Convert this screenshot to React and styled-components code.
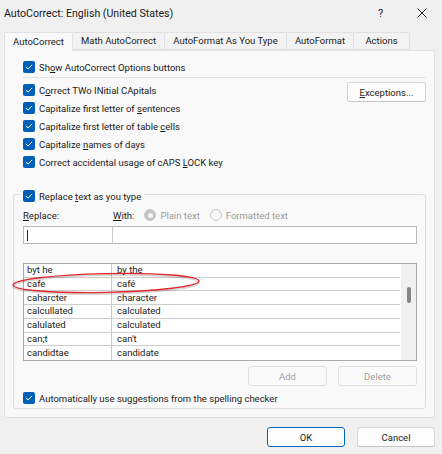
import React from 'react'
import styled, { createGlobalStyle } from 'styled-components'

const GlobalStyle = createGlobalStyle`
  html, body {
    margin: 0;
    padding: 0;
    background: #f0f0f0;
  }
  body {
    font-family: Roboto, "Noto Sans", sans-serif;
    font-size: 9.5px;
    color: #1b1b1b;
  }
`

const tabs = [
    { label: 'AutoCorrect', w: 69, active: true },
    { label: 'Math AutoCorrect', w: 92 },
    { label: 'AutoFormat As You Type', w: 122 },
    { label: 'AutoFormat', w: 67 },
    { label: 'Actions', w: 56 },
]

const entries = [
    ['byt he', 'by the'],
    ['cafe', 'café'],
    ['caharcter', 'character'],
    ['calcullated', 'calculated'],
    ['calulated', 'calculated'],
    ['can;t', "can't"],
    ['candidtae', 'candidate'],
]

const Check = () => (
    <CheckBox>
        <svg width="12" height="12" viewBox="0 0 12 12">
            <path d="M3.2 6.2 L5.1 8 L8.8 4.2" fill="none" stroke="#fff" strokeWidth="1" strokeLinecap="round" strokeLinejoin="round" />
        </svg>
    </CheckBox>
)

const Option = ({ children }) => (
    <CheckRow>
        <Check />
        <span>{children}</span>
    </CheckRow>
)

const App = () => {
    return (
        <Window>
            <GlobalStyle />
            <TitleBar>
                <Title>AutoCorrect: English (United States)</Title>
                <CaptionButton>?</CaptionButton>
                <CaptionButton>
                    <svg width="10" height="10" viewBox="0 0 10 10">
                        <path d="M0.5 0.5 L9.5 9.5 M9.5 0.5 L0.5 9.5" stroke="#222" strokeWidth="1" />
                    </svg>
                </CaptionButton>
            </TitleBar>

            <TabStrip>
                {tabs.map(t => (
                    <Tab key={t.label} w={t.w} active={t.active}>{t.label}</Tab>
                ))}
            </TabStrip>

            <Panel>
                <Option>Sh<u>o</u>w AutoCorrect Options buttons</Option>
                <Separator />

                <OptionsBlock>
                    <OptionColumn>
                        <Option>C<u>o</u>rrect TWo INitial CApitals</Option>
                        <Option>Capitalize first letter of <u>s</u>entences</Option>
                        <Option>Capitalize first letter of table <u>c</u>ells</Option>
                        <Option>Capitalize <u>n</u>ames of days</Option>
                        <Option>Correct accidental usage of cAPS <u>L</u>OCK key</Option>
                    </OptionColumn>
                    <ExceptionsButton><u>E</u>xceptions...</ExceptionsButton>
                </OptionsBlock>

                <GroupBox>
                    <GroupHeader>
                        <Check />
                        <span>Replace <u>t</u>ext as you type</span>
                    </GroupHeader>

                    <LabelRow>
                        <ReplaceLabel><u>R</u>eplace:</ReplaceLabel>
                        <span><u>W</u>ith:</span>
                        <RadioItem>
                            <Radio checked />
                            <span>Plain text</span>
                        </RadioItem>
                        <RadioItem>
                            <Radio />
                            <span>Formatted text</span>
                        </RadioItem>
                    </LabelRow>

                    <InputRow>
                        <ReplaceInput><Caret /></ReplaceInput>
                        <WithInput />
                    </InputRow>

                    <ListBox>
                        <ListRows>
                            {entries.map(([from, to]) => (
                                <ListRow key={from}>
                                    <FromCell>{from}</FromCell>
                                    <ToCell>{to}</ToCell>
                                </ListRow>
                            ))}
                        </ListRows>
                        <ScrollBar>
                            <Thumb />
                        </ScrollBar>
                    </ListBox>

                    <ButtonRow>
                        <SmallButton disabled>Add</SmallButton>
                        <SmallButton disabled>Delete</SmallButton>
                    </ButtonRow>

                    <AutoRow>
                        <Check />
                        <span>Automatically use su<u>g</u>gestions from the spelling checker</span>
                    </AutoRow>
                </GroupBox>
            </Panel>

            <Footer>
                <DialogButton primary>OK</DialogButton>
                <DialogButton>Cancel</DialogButton>
            </Footer>

            {/* hand drawn annotation round the cafe row */}
            <Annotation width="200" height="30" viewBox="0 0 200 30">
                <ellipse cx="96" cy="14.5" rx="93" ry="9.4" transform="rotate(-1.2 96 14)" fill="none" stroke="rgba(0,0,0,0.15)" strokeWidth="2" />
                <ellipse cx="96" cy="13" rx="93" ry="9.4" transform="rotate(-1.2 96 13)" fill="none" stroke="#e3262b" strokeWidth="1.4" />
            </Annotation>
        </Window>
    )
}

export default App

const Window = styled.div`
    position: relative;
    width: 442px;
    height: 454px;
    overflow: hidden;
    background: #f0f0f0;
    display: flex;
    flex-direction: column;
`

const TitleBar = styled.div`
    display: flex;
    align-items: center;
    height: 28px;
    padding-left: 4px;
    font-size: 10.6px;
    color: #1a1a1a;
`

const Title = styled.div`
    flex: 1;
    margin-top: -2px;
`

const CaptionButton = styled.div`
    width: 41px;
    height: 28px;
    display: flex;
    align-items: center;
    justify-content: center;
    font-size: 11px;
    margin-top: -2px;
`

const TabStrip = styled.div`
    display: flex;
    margin-top: 4px;
    padding-left: 4px;
    height: 18px;
    position: relative;
    z-index: 1;
`

const Tab = styled.div`
    width: ${({ w }) => w}px;
    box-sizing: border-box;
    display: flex;
    align-items: center;
    justify-content: center;
    white-space: nowrap;
    height: ${({ active }) => (active ? '19px' : '18px')};
    background: ${({ active }) => (active ? '#f9f9f9' : '#f3f3f3')};
    border: 1px solid #e1e1e1;
    border-bottom: ${({ active }) => (active ? 'none' : '1px solid #e1e1e1')};
    border-left: ${({ active }) => (active ? '1px solid #e1e1e1' : 'none')};
    border-radius: 2px 2px 0 0;
    padding-bottom: 1px;
`

const Panel = styled.div`
    height: 368px;
    box-sizing: border-box;
    margin: 0 7px 0 4px;
    background: #f9f9f9;
    border: 1px solid #e1e1e1;
    border-radius: 0 2px 2px 2px;
    padding: 8px 8px 0 8px;
    display: flex;
    flex-direction: column;
`

const CheckRow = styled.div`
    display: flex;
    align-items: center;
    gap: 4px;
    height: 16px;
    margin-left: 10px;
    white-space: nowrap;
`

const CheckBox = styled.span`
    width: 12px;
    height: 12px;
    flex: none;
    border-radius: 2px;
    background: #005fb8;
    display: inline-flex;
`

const Separator = styled.div`
    height: 1px;
    background: #e3e3e3;
    margin: 2px 0 0 10px;
`

const OptionsBlock = styled.div`
    display: flex;
    justify-content: space-between;
    margin-top: 3px;

    ${CheckRow} {
        height: 18px;
    }
`

const OptionColumn = styled.div`
    display: flex;
    flex-direction: column;
`

const ButtonBase = styled.div`
    box-sizing: border-box;
    display: flex;
    align-items: center;
    justify-content: center;
    height: 20px;
    border-radius: 3px;
    background: #fdfdfd;
    border: 1px solid #d6d6d6;
    border-bottom-color: #c4c4c4;
`

const ExceptionsButton = styled(ButtonBase)`
    width: 79px;
    margin-top: 1px;
`

const GroupBox = styled.div`
    box-sizing: border-box;
    margin-top: 23px;
    height: 215px;
    border: 1px solid #dcdcdc;
    border-radius: 3px;
    padding: 0 8px 0 9px;
    display: flex;
    flex-direction: column;
`

const GroupHeader = styled.div`
    display: flex;
    align-items: center;
    gap: 4px;
    height: 16px;
    width: fit-content;
    margin: -7px 0 0 -3px;
    padding: 0 3px;
    background: #f9f9f9;
`

const LabelRow = styled.div`
    display: flex;
    align-items: center;
    height: 14px;
    margin-top: 4px;
`

const ReplaceLabel = styled.span`
    width: 90px;
`

const RadioItem = styled.span`
    display: flex;
    align-items: center;
    gap: 4px;
    color: #9c9c9c;
    margin-left: 10px;
`

const Radio = styled.span`
    box-sizing: border-box;
    width: 12px;
    height: 12px;
    border-radius: 50%;
    border: 1px solid #c6c6c6;
    background: ${({ checked }) => (checked ? '#c4c4c4' : 'transparent')};
    display: flex;
    align-items: center;
    justify-content: center;

    &::after {
        content: '';
        display: ${({ checked }) => (checked ? 'block' : 'none')};
        width: 5px;
        height: 5px;
        border-radius: 50%;
        background: #f3f3f3;
    }
`

const InputRow = styled.div`
    display: flex;
    height: 18px;
    margin-top: 4px;
`

const InputBox = styled.div`
    box-sizing: border-box;
    height: 18px;
    background: #fff;
    border: 1px solid #b9b9b9;
    display: flex;
    align-items: center;
`

const ReplaceInput = styled(InputBox)`
    width: 90px;
    padding-left: 3px;
`

const Caret = styled.span`
    width: 1px;
    height: 11px;
    background: #222;
`

const WithInput = styled(InputBox)`
    flex: 1;
    border-left: 1px solid #c8c8c8;
    margin-left: -1px;
`

const ListBox = styled.div`
    box-sizing: border-box;
    height: 98px;
    margin-top: 19px;
    border: 1px solid #aaaaaa;
    background: #fff;
    display: flex;
`

const ListRows = styled.div`
    flex: 1;
    display: grid;
    grid-template-rows: repeat(7, 1fr);
    margin-right: 1px;
`

const ListRow = styled.div`
    display: flex;
    border-bottom: 1px solid #cdcdcd;
    line-height: 12px;

    &:last-child {
        border-bottom: none;
    }
`

const FromCell = styled.div`
    width: 84px;
    padding-left: 3px;
    border-right: 1px solid #c8c8c8;
    display: flex;
    align-items: center;
`

const ToCell = styled.div`
    flex: 1;
    padding-left: 5px;
    display: flex;
    align-items: center;
`

const ScrollBar = styled.div`
    width: 15px;
    background: #f0f0f0;
    display: flex;
    justify-content: center;
`

const Thumb = styled.div`
    width: 4px;
    height: 16px;
    margin-top: 23px;
    border-radius: 2px;
    background: #868686;
`

const ButtonRow = styled.div`
    display: flex;
    justify-content: flex-end;
    gap: 11px;
    margin-top: 5px;
`

const SmallButton = styled(ButtonBase)`
    width: 79px;
    color: ${({ disabled }) => (disabled ? '#a0a0a0' : '#1b1b1b')};
    background: ${({ disabled }) => (disabled ? '#fafafa' : '#fdfdfd')};
    border-color: #e0e0e0;
`

const AutoRow = styled(CheckRow)`
    margin: 4px 0 0 0;
`

const Footer = styled.div`
    display: flex;
    justify-content: flex-end;
    gap: 12px;
    margin-top: 9px;
    padding-right: 7px;
`

const DialogButton = styled(ButtonBase)`
    width: 78px;
    border-color: ${({ primary }) => (primary ? '#0067c0' : '#d6d6d6')};
    border-bottom-color: ${({ primary }) => (primary ? '#0067c0' : '#c4c4c4')};
`

const Annotation = styled.svg`
    position: absolute;
    left: 10px;
    top: 270px;
    pointer-events: none;
`
